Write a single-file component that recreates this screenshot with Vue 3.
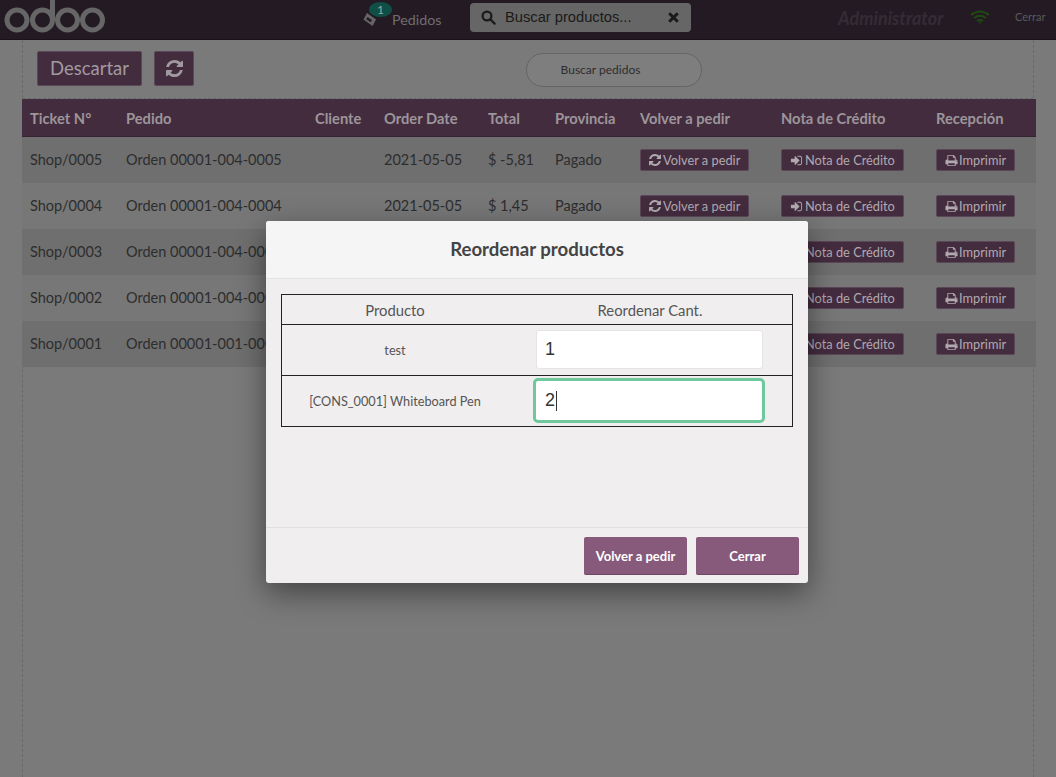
<script setup>
const orders = [
  { ticket: 'Shop/0005', order: 'Orden 00001-004-0005', date: '2021-05-05', total: '$ -5,81' },
  { ticket: 'Shop/0004', order: 'Orden 00001-004-0004', date: '2021-05-05', total: '$ 1,45' },
  { ticket: 'Shop/0003', order: 'Orden 00001-004-0003', date: '2021-05-05', total: '$ 1,45' },
  { ticket: 'Shop/0002', order: 'Orden 00001-004-0002', date: '2021-05-05', total: '$ 1,45' },
  { ticket: 'Shop/0001', order: 'Orden 00001-001-0001', date: '2021-05-05', total: '$ 1,45' }
];
const headers = ['Ticket N°', 'Pedido', 'Cliente', 'Order Date', 'Total', 'Provincia', 'Volver a pedir', 'Nota de Crédito', 'Recepción'];
const refreshPath = 'M1511 928q0 5-1 7-64 268-268 434.5t-478 166.5q-146 0-282.5-55t-243.5-157l-129 129q-19 19-45 19t-45-19-19-45v-448q0-26 19-45t45-19h448q26 0 45 19t19 45-19 45l-137 137q71 66 161 102t187 36q134 0 250-65t186-179q11-17 53-117 8-23 30-23h192q13 0 22.5 9.5t9.5 22.5zm25-800v448q0 26-19 45t-45 19h-448q-26 0-45-19t-19-45 19-45l138-138q-148-137-349-137-134 0-250 65t-186 179q-11 17-53 117-8 23-30 23h-199q-13 0-22.5-9.5t-9.5-22.5v-7q65-268 270-434.5t480-166.5q146 0 284 55.5t245 156.5l130-129q19-19 45-19t45 19 19 45z';
const signInPath = 'M1184 896q0 26-19 45l-544 544q-19 19-45 19t-45-19-19-45v-288h-448q-26 0-45-19t-19-45v-384q0-26 19-45t45-19h448v-288q0-26 19-45t45-19 45 19l544 544q19 19 19 45zm352-352v704q0 119-84.5 203.5t-203.5 84.5h-320q-13 0-22.5-9.5t-9.5-22.5q0-4-1-20t-.5-26.5 3-23.5 10-19.5 20.5-6.5h320q66 0 113-47t47-113v-704q0-66-47-113t-113-47h-312l-11.5-1-11.5-3-8-5.5-7-9-2-13.5q0-4-1-20t-.5-26.5 3-23.5 10-19.5 20.5-6.5h320q119 0 203.5 84.5t84.5 203.5z';
const printPath = 'M448 1536h896v-256h-896v256zm0-640h896v-384h-160q-40 0-68-28t-28-68v-160h-640v640zm1152 64q0-26-19-45t-45-19-45 19-19 45 19 45 45 19 45-19 19-45zm128 0v416q0 13-9.5 22.5t-22.5 9.5h-224v160q0 40-28 68t-68 28h-960q-40 0-68-28t-28-68v-160h-224q-13 0-22.5-9.5t-9.5-22.5v-416q0-79 56.5-135.5t135.5-56.5h64v-544q0-40 28-68t68-28h672q40 0 88 20t76 48l152 152q28 28 48 76t20 88v256h64q79 0 135.5 56.5t56.5 135.5z';
</script>

<template>
  <div class="pos">
    <header class="topbar">
      <svg class="logo" width="106" height="36" viewBox="0 0 106 36" fill="none" stroke="#666666" stroke-width="5">
        <circle cx="17" cy="20" r="10" />
        <circle cx="42.5" cy="20" r="10" />
        <path d="M52.500 20V0" />
        <circle cx="67.5" cy="20" r="10" />
        <circle cx="92.5" cy="20" r="10" />
      </svg>
      <div class="orders-tab">
        <svg class="ticket" width="15" height="15" viewBox="0 0 15 15">
          <path d="M5 1l9 6.500-3.500 6.500-9-6.500z" fill="#666666" />
          <path d="M5.500 5l4.500 3-1.300 2.300-4.500-3z" fill="#241a24" />
        </svg>
        <span class="badge">1</span>
        <span class="orders-label">Pedidos</span>
      </div>
      <div class="product-search">
        <svg width="15" height="15" viewBox="0 0 15 15" fill="none" stroke="#1a1a1a" stroke-width="2.200">
          <circle cx="6" cy="6" r="4.400" />
          <path d="M9.400 9.400l4.200 4.200" stroke-linecap="round" />
        </svg>
        <span class="search-text">Buscar productos...</span>
        <svg class="clear" width="11" height="11" viewBox="0 0 11 11" stroke="#1a1a1a" stroke-width="3">
          <path d="M1.200 1.200l8.600 8.600M9.800 1.200l-8.600 8.600" />
        </svg>
      </div>
      <span class="admin">Administrator</span>
      <svg class="wifi" width="20" height="14" viewBox="0 0 20 14" fill="none" stroke="#1f4a12" stroke-width="2">
        <path d="M1 5q9-7 18 0M4 8q6-4.500 12 0M7 11q3-2 6 0" />
        <circle cx="10" cy="12.500" r="1" fill="#1f4a12" stroke="none" />
      </svg>
      <span class="close-session">Cerrar</span>
    </header>

    <main class="screen">
      <div class="actions">
        <button class="btn-discard">Descartar</button>
        <button class="btn-refresh">
          <svg width="17" height="17" viewBox="0 0 1536 1536"><path :d="refreshPath" fill="currentColor" /></svg>
        </button>
        <div class="order-search">Buscar pedidos</div>
      </div>

      <div class="orders">
        <div class="row head">
          <div v-for="h in headers" :key="h" class="cell">{{ h }}</div>
        </div>
        <div v-for="o in orders" :key="o.ticket" class="row item">
          <div class="cell">{{ o.ticket }}</div>
          <div class="cell">{{ o.order }}</div>
          <div class="cell"></div>
          <div class="cell">{{ o.date }}</div>
          <div class="cell">{{ o.total }}</div>
          <div class="cell">Pagado</div>
          <div class="cell">
            <span class="mini">
              <svg width="12" height="12" viewBox="0 0 1536 1536"><path :d="refreshPath" fill="currentColor" /></svg>Volver a pedir
            </span>
          </div>
          <div class="cell">
            <span class="mini">
              <svg width="13" height="13" viewBox="0 0 1536 1792"><path :d="signInPath" fill="currentColor" /></svg>Nota de Crédito
            </span>
          </div>
          <div class="cell">
            <span class="mini print">
              <svg width="13" height="13" viewBox="0 0 1792 1792"><path :d="printPath" fill="currentColor" /></svg>Imprimir
            </span>
          </div>
        </div>
      </div>
    </main>

    <div class="modal">
      <div class="modal-title">Reordenar productos</div>
      <div class="modal-body">
        <table class="reorder">
          <thead>
            <tr>
              <th class="col-product">Producto</th>
              <th>Reordenar Cant.</th>
            </tr>
          </thead>
          <tbody>
            <tr>
              <td>test</td>
              <td><div class="qty">1</div></td>
            </tr>
            <tr>
              <td>[CONS_0001] Whiteboard Pen</td>
              <td><div class="qty active">2<i class="caret"></i></div></td>
            </tr>
          </tbody>
        </table>
      </div>
      <div class="modal-footer">
        <button class="btn-modal">Volver a pedir</button>
        <button class="btn-modal">Cerrar</button>
      </div>
    </div>
  </div>
</template>

<style>
html, body { margin: 0; height: 100%; overflow: hidden; }
</style>

<style scoped>
.pos {
  position: relative;
  width: 1056px;
  height: 777px;
  overflow: hidden;
  background: #7a7a7a;
  font-family: Lato, "Open Sans", sans-serif;
  color: #2d2d2d;
}
.topbar {
  display: flex;
  align-items: center;
  height: 39px;
  background: #241a24;
  border-bottom: 1px solid #1a121a;
}
.logo { flex: none; margin-top: -3px; }
.orders-tab {
  display: flex;
  align-items: center;
  margin-left: 256px;
  position: relative;
  font-size: 14.300px;
  color: #6e6e6e;
  width: 108px;
  flex: none;
}
.ticket { flex: none; }
.orders-label { margin-left: 15px; }
.badge {
  position: absolute;
  left: 7px;
  top: -9px;
  width: 23px;
  height: 15px;
  border-radius: 50%;
  background: #0f4f45;
  color: #9aa5a5;
  font-size: 12px;
  line-height: 15px;
  text-align: center;
}
.product-search {
  display: flex;
  align-items: center;
  width: 221px;
  height: 29px;
  margin-top: -4px;
  flex: none;
  box-sizing: border-box;
  padding: 0 11px;
  border-radius: 4px;
  background: #666666;
}
.search-text {
  margin-left: 9px;
  margin-top: -2px;
  font-family: "Liberation Sans", Arial, sans-serif;
  font-size: 14.700px;
  color: #1a1a1a;
  flex: 1;
}
.clear { margin-right: 1px; }
.admin {
  margin-left: 147px;
  width: 105px;
  flex: none;
  margin-top: -3px;
  font-size: 18px;
  font-style: italic;
  font-weight: 700;
  white-space: nowrap;
  color: #352b35;
}
.wifi { margin-left: 27px; margin-top: -5px; flex: none; }
.close-session {
  margin-left: 25px;
  font-size: 11px;
  margin-top: -6px;
  color: #5a5a5a;
}
.screen {
  margin-left: 22px;
  height: 737px;
  box-sizing: border-box;
  border-left: 1px dashed #696969;
  border-right: 1px dashed #696969;
  width: 1012px;
}
.actions {
  display: flex;
  align-items: flex-start;
  height: 59px;
  padding: 11px 0 0 14px;
  box-sizing: border-box;
  border-bottom: 1px dashed #696969;
}
.btn-discard, .btn-refresh {
  height: 35px;
  border: 1px solid #5a4757;
  border-radius: 2px;
  background: #442c3f;
  color: #a09aa0;
  font-family: inherit;
  padding: 0;
}
.btn-discard { width: 105px; font-size: 18.500px; padding-bottom: 2px; }
.btn-refresh {
  width: 40px;
  margin-left: 12px;
  display: flex;
  align-items: center;
  justify-content: center;
}
.order-search {
  width: 176px;
  height: 34px;
  margin: 2px 0 0 332px;
  box-sizing: border-box;
  padding-right: 27px;
  border: 1px solid #656565;
  border-radius: 17px;
  background: #7e7e7e;
  font-size: 12px;
  line-height: 32px;
  text-align: center;
}
.orders { margin-right: -3px; margin-left: -1px; }
.row {
  display: grid;
  grid-template-columns: 96px 189px 69px 104px 67px 85px 141px 155px 1fr;
}
.cell {
  display: flex;
  align-items: center;
  padding-left: 8px;
  box-sizing: border-box;
  white-space: nowrap;
}
.head {
  height: 38px;
  background: #442c3f;
  border-bottom: 1px solid #362331;
  box-sizing: border-box;
  color: #9c959a;
  font-size: 14.700px;
  font-weight: 700;
  padding-top: 1px;
}
.item {
  height: 46px;
  font-size: 14.500px;
}
.item .cell { padding-bottom: 2px; }
.item:nth-child(even) { background: #6f6f6f; }
.item:nth-child(odd) { background: #777777; }
.mini {
  display: inline-flex;
  align-items: center;
  gap: 2px;
  height: 22px;
  box-sizing: border-box;
  margin-bottom: -2px;
  padding: 0 8px;
  border: 1px solid #5a4757;
  border-radius: 2px;
  background: #442c3f;
  color: #b0a9af;
  font-size: 12.800px;
}
.mini.print { gap: 1px; }
.modal {
  position: absolute;
  left: 266px;
  top: 221px;
  width: 542px;
  height: 362px;
  display: flex;
  flex-direction: column;
  background: #f0eeee;
  border-radius: 3px;
  box-shadow: 0 10px 30px rgba(0, 0, 0, 0.45);
}
.modal-title {
  height: 58px;
  box-sizing: border-box;
  background: #f5f5f5;
  border-bottom: 1px solid #e4e2e2;
  border-radius: 3px 3px 0 0;
  color: #444444;
  font-size: 18.600px;
  font-weight: 700;
  line-height: 57px;
  text-align: center;
}
.modal-body {
  flex: 1;
  padding: 15px 15px 0;
}
.reorder {
  width: 512px;
  border-collapse: collapse;
  border: 1px solid #222222;
  table-layout: fixed;
  color: #555555;
  text-align: center;
}
.reorder th {
  height: 29px;
  padding: 0;
  font-size: 14.800px;
  font-weight: 400;
  border-bottom: 1px solid #222222;
}
.reorder td {
  height: 50px;
  padding: 0;
  font-size: 12.700px;
  border-bottom: 1px solid #222222;
}
.col-product { width: 226px; }
.qty {
  display: flex;
  align-items: center;
  width: 227px;
  height: 39px;
  margin: 0 0 1px 28px;
  box-sizing: border-box;
  padding-left: 8px;
  background: #ffffff;
  border: 1px solid #e6e4e4;
  border-radius: 3px;
  font-family: "Liberation Sans", Arial, sans-serif;
  font-size: 18px;
  color: #333333;
}
.qty.active {
  width: 232px;
  height: 45px;
  margin: 0 0 1px 25px;
  padding-left: 9px;
  border: 3px solid #6ec89b;
  border-radius: 5px;
}
.caret {
  width: 1px;
  height: 20px;
  margin-left: 1px;
  background: #333333;
}
.modal-footer {
  display: flex;
  justify-content: flex-end;
  gap: 9px;
  height: 56px;
  box-sizing: border-box;
  padding: 9px 9px 0 0;
  border-top: 1px solid #e0dede;
}
.btn-modal {
  width: 103px;
  height: 38px;
  padding: 0;
  border: none;
  border-bottom: 1px solid #6f4866;
  border-radius: 2px;
  background: #875a7b;
  color: #ffffff;
  font-family: inherit;
  font-size: 13px;
  font-weight: 700;
}
</style>
